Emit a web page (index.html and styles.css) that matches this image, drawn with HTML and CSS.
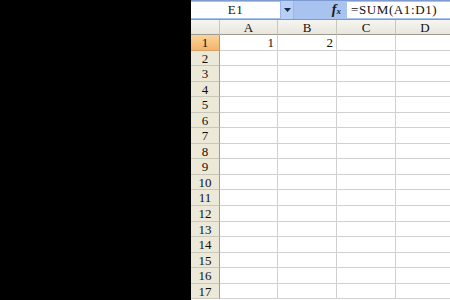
FILE: index.html
```html
<!DOCTYPE html>
<html>
<head>
<meta charset="utf-8">
<link rel="stylesheet" href="styles.css">
</head>
<body>
<div class="app">
  <div class="blackout"></div>
  <div class="sheet">
    <div class="fbar">
      <div class="namebox">E1</div>
      <div class="dropbtn"><svg width="7" height="4" viewBox="0 0 7 4"><path d="M0 0H7L3.5 4Z" fill="#1a2a4a"/></svg></div>
      <div class="fxzone"><span class="fx"><i>f</i><span class="x">x</span></span></div>
      <div class="formula">=SUM(A1:D1)</div>
    </div>
    <div class="grid">
      <div class="corner"></div>
      <div class="ch">A</div><div class="ch">B</div><div class="ch">C</div><div class="ch">D</div>
      <div class="rh sel">1</div><div class="c num">1</div><div class="c num">2</div><div class="c"></div><div class="c"></div>
      <div class="rh">2</div><div class="c"></div><div class="c"></div><div class="c"></div><div class="c"></div>
      <div class="rh">3</div><div class="c"></div><div class="c"></div><div class="c"></div><div class="c"></div>
      <div class="rh">4</div><div class="c"></div><div class="c"></div><div class="c"></div><div class="c"></div>
      <div class="rh">5</div><div class="c"></div><div class="c"></div><div class="c"></div><div class="c"></div>
      <div class="rh">6</div><div class="c"></div><div class="c"></div><div class="c"></div><div class="c"></div>
      <div class="rh">7</div><div class="c"></div><div class="c"></div><div class="c"></div><div class="c"></div>
      <div class="rh">8</div><div class="c"></div><div class="c"></div><div class="c"></div><div class="c"></div>
      <div class="rh">9</div><div class="c"></div><div class="c"></div><div class="c"></div><div class="c"></div>
      <div class="rh">10</div><div class="c"></div><div class="c"></div><div class="c"></div><div class="c"></div>
      <div class="rh">11</div><div class="c"></div><div class="c"></div><div class="c"></div><div class="c"></div>
      <div class="rh">12</div><div class="c"></div><div class="c"></div><div class="c"></div><div class="c"></div>
      <div class="rh">13</div><div class="c"></div><div class="c"></div><div class="c"></div><div class="c"></div>
      <div class="rh">14</div><div class="c"></div><div class="c"></div><div class="c"></div><div class="c"></div>
      <div class="rh">15</div><div class="c"></div><div class="c"></div><div class="c"></div><div class="c"></div>
      <div class="rh">16</div><div class="c"></div><div class="c"></div><div class="c"></div><div class="c"></div>
      <div class="rh">17</div><div class="c"></div><div class="c"></div><div class="c"></div><div class="c"></div>
    </div>
  </div>
</div>
</body>
</html>
```
FILE: styles.css
```css
html, body {
  margin: 0;
  padding: 0;
  background: #000;
  overflow: hidden;
}
.app {
  display: flex;
  width: 450px;
  height: 300px;
}
.blackout {
  width: 191px;
  flex: none;
  background: #000;
}
.sheet {
  flex: 1;
  background: #fff;
  display: flex;
  flex-direction: column;
  overflow: hidden;
  font-family: "Liberation Serif", "DejaVu Serif", serif;
  font-size: 13px;
  color: #111;
}
.fbar {
  display: flex;
  box-sizing: border-box;
  height: 20px;
  border-top: 1px solid #7d9bd0;
  background: #a8c3ef;
  border-bottom: 1px solid #8d97a8;
}
.namebox {
  width: 89px;
  background: #fff;
  margin: 1px 0;
  text-align: center;
  line-height: 16px;
  letter-spacing: 0.5px;
}
.dropbtn {
  width: 14px;
  background: #b7cff5;
  border-left: 1px solid #9ab6e6;
  border-right: 1px solid #9ab6e6;
  box-sizing: border-box;
  display: flex;
  align-items: center;
  justify-content: center;
}
.fxzone {
  width: 53px;
  display: flex;
  justify-content: flex-end;
  align-items: center;
  padding-right: 6px;
  box-sizing: border-box;
}
.fx {
  font-family: "Liberation Serif", serif;
  font-size: 14px;
  line-height: 12px;
  color: #1a1a1a;
  font-weight: bold;
}
.fx i { font-style: italic; }
.fx .x { font-size: 9px; font-style: italic; }
.formula {
  flex: 1;
  background: #fff;
  margin: 1px 0;
  padding-left: 4px;
  line-height: 16px;
  letter-spacing: 0.6px;
  white-space: nowrap;
}
.grid {
  display: grid;
  grid-template-columns: 29px 58px 59px 59px 59px;
  grid-template-rows: 15px repeat(17, 15.56px);
}
.corner, .ch {
  background: linear-gradient(#f6f5f1, #e8e6dd);
  border-right: 1px solid #c9c7ba;
  border-bottom: 1px solid #9d9b8f;
  box-sizing: border-box;
}
.ch {
  text-align: center;
  line-height: 15px;
}
.rh {
  background: #ece9d8;
  border-right: 1px solid #9d9b8f;
  border-bottom: 1px solid #c9c7ba;
  box-sizing: border-box;
  text-align: center;
  line-height: 15px;
}
.rh.sel {
  background: linear-gradient(#fbd49c, #f3b46a);
  border-bottom-color: #d6a468;
}
.c {
  border-right: 1px solid #d0d0d0;
  border-bottom: 1px solid #d0d0d0;
  box-sizing: border-box;
  line-height: 15px;
  padding: 0 3px;
}
.num {
  text-align: right;
}
```
